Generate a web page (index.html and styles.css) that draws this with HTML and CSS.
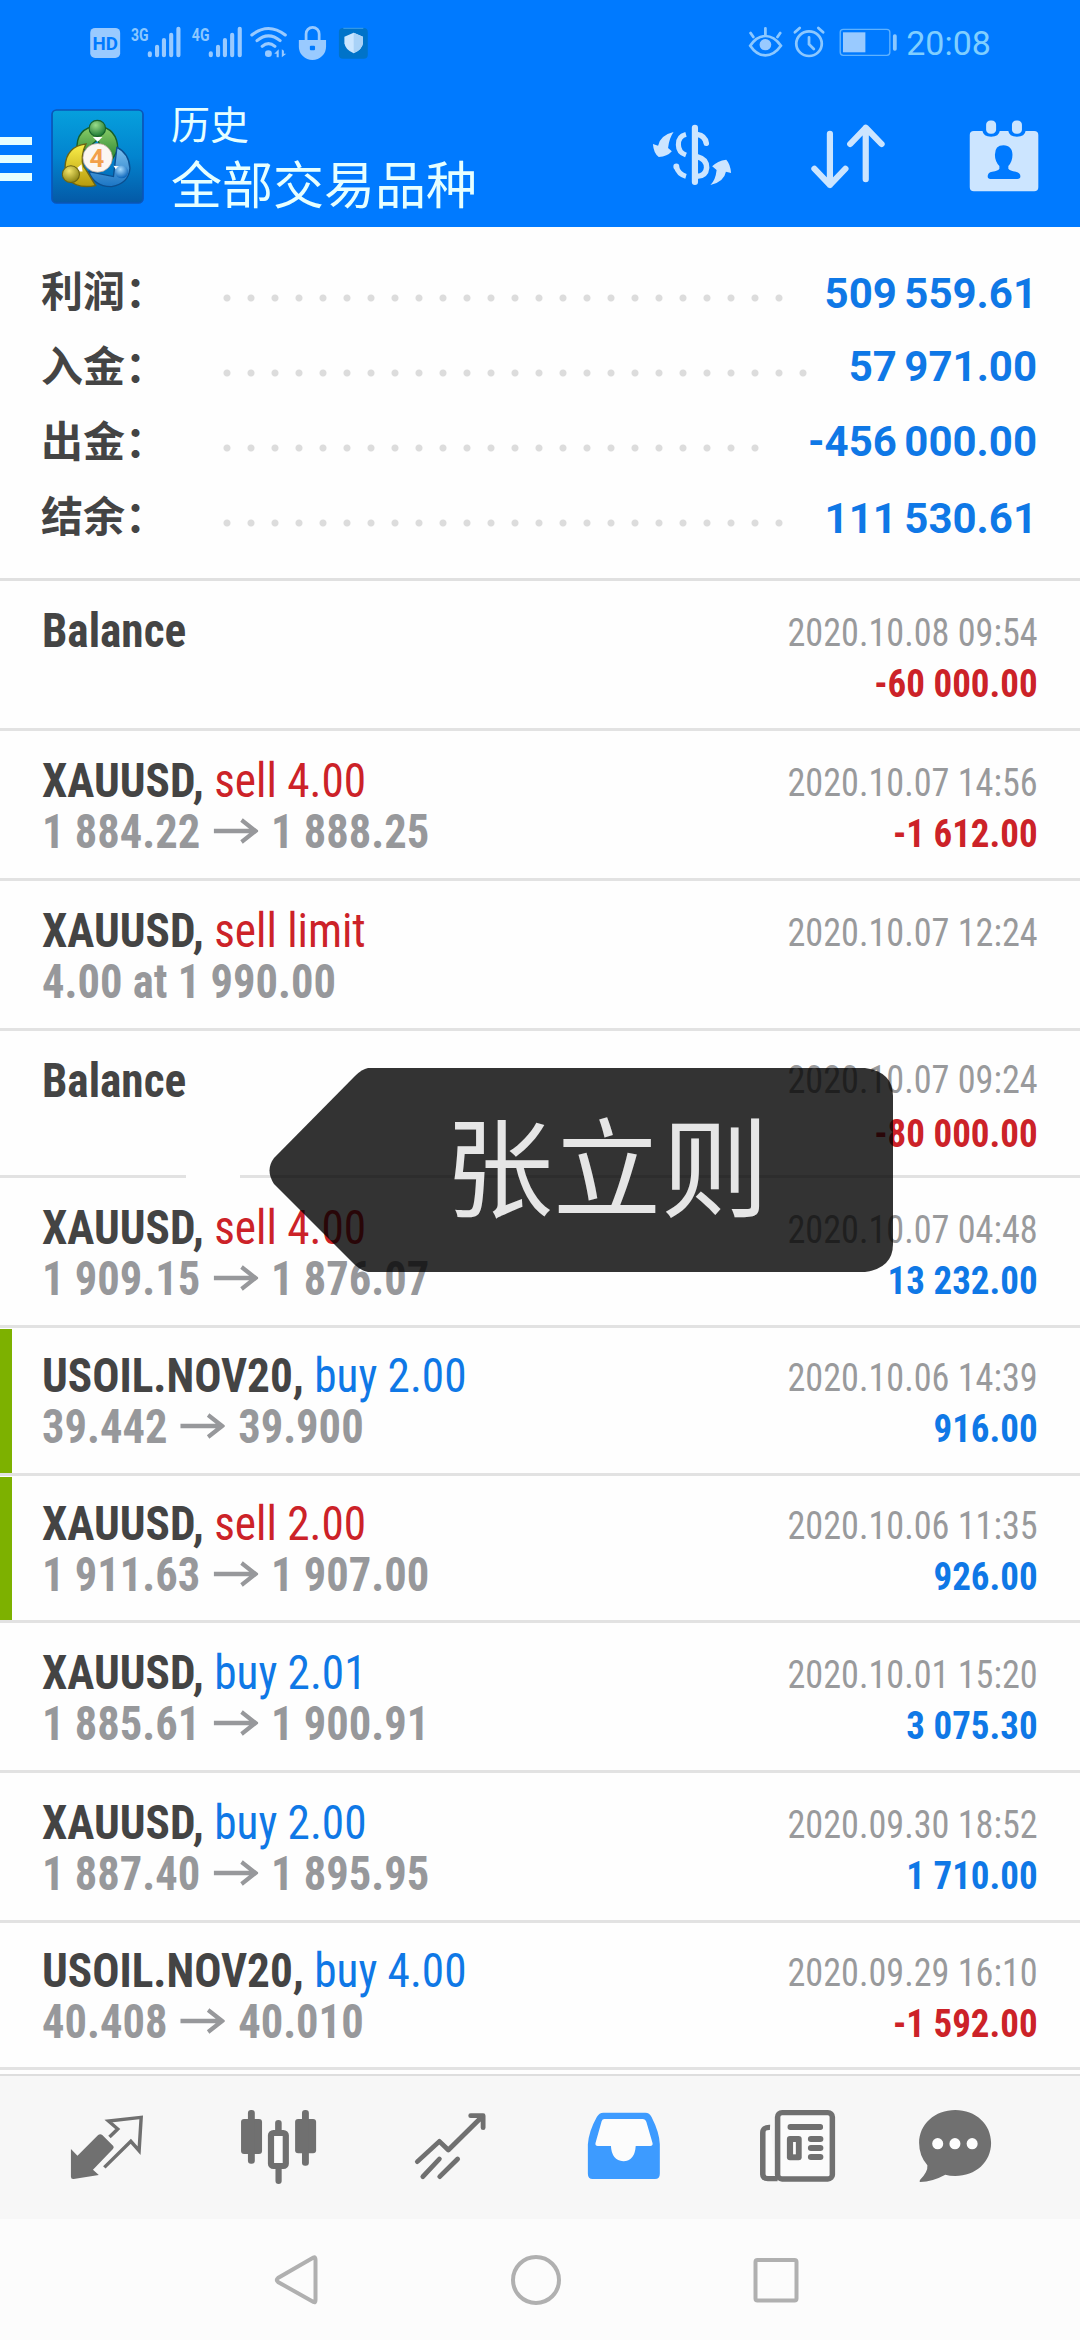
FILE: index.html
```html
<!DOCTYPE html>
<html lang="zh-CN">
<head>
<meta charset="utf-8">
<title>历史</title>
<link rel="stylesheet" href="styles.css">
</head>
<body>
<div class="screen">
  <header class="header">
    <div class="status">
      <div class="status-group">
        <svg class="ic" viewBox="240 60 120 130" width="41.3" height="43.3" preserveAspectRatio="none"><rect x="261" y="84" width="87" height="90" rx="14" fill="#99caff"/><text x="304.500" y="151" font-size="57" textLength="74" lengthAdjust="spacingAndGlyphs" text-anchor="middle" class="hd">HD</text></svg>
        <svg class="ic" viewBox="360 60 180 130" width="62" height="43.3" preserveAspectRatio="none"><text x="380" y="122" font-size="57" textLength="51" lengthAdjust="spacingAndGlyphs" class="net">3G</text><g stroke="#99caff" stroke-width="12" stroke-linecap="round"><path d="M435 160v6M456 140v26M476 120v46M497 104v62M518 86v80"/></g></svg>
        <svg class="ic" viewBox="540 60 175 130" width="60.3" height="43.3" preserveAspectRatio="none"><text x="557" y="122" font-size="57" textLength="51" lengthAdjust="spacingAndGlyphs" class="net">4G</text><g stroke="#99caff" stroke-width="12" stroke-linecap="round"><path d="M612 160v6M633 140v26M653 120v46M674 104v62M696 86v80"/></g></svg>
        <svg class="ic" viewBox="715 60 135 130" width="46.5" height="43.3" preserveAspectRatio="none"><g fill="none" stroke="#99caff" stroke-width="9" stroke-linecap="round"><path d="M732 105Q780 66 829 105M747 122Q780 93 814 122M762 139Q780 123 799 139"/></g><circle cx="780" cy="161" r="10" fill="#99caff"/><path d="M797 161l13-13v24h-6v-11zM819 148v24l13-11h-7v-9z" fill="#99caff"/></svg>
        <svg class="ic" viewBox="850 60 115 130" width="39.600" height="43.3" preserveAspectRatio="none"><path d="M888 122v-20a19 20 0 0 1 38 0v20" fill="none" stroke="#99caff" stroke-width="8"/><path d="M867 120h79v20a39.500 40 0 0 1-79 0z" fill="#99caff"/><rect x="899" y="137" width="15" height="14" rx="3" fill="#007aff"/></svg>
        <svg class="ic" viewBox="965 60 125 130" width="43" height="43.3" preserveAspectRatio="none"><rect x="985" y="84" width="84" height="92" rx="12" fill="#0073c9"/><path d="M998 85h58" stroke="#3fa0e8" stroke-width="3"/><path d="M1028 98l27 12v20q-3 20-27 30q-24-10-27-30v-20z" fill="#cbe6ff"/><path d="M1028 98l27 12v20q-3 20-27 30z" fill="#a9d2f7"/></svg>
      </div>
      <div class="status-group status-right">
        <svg class="ic" viewBox="590 60 130 130" width="44.800" height="43.3" preserveAspectRatio="none"><g fill="none" stroke="#8cc8ff" stroke-width="8" stroke-linecap="round"><path d="M611 137Q630 108 655 108T700 137Q680 166 655 166T611 137zM612 99l8 12M655 85v20M698 99l-8 12"/></g><circle cx="655" cy="134" r="17" fill="#99caff"/></svg>
        <svg class="ic" viewBox="720 60 130 130" width="44.800" height="43.3" preserveAspectRatio="none"><g fill="none" stroke="#8cc8ff" stroke-width="8" stroke-linecap="round"><circle cx="781" cy="131" r="37"/><path d="M740 97l14-13M808 84l14 13M781 112v21l14 14"/></g></svg>
        <svg class="ic" viewBox="850 60 200 130" width="68.900" height="43.3" preserveAspectRatio="none"><rect x="871" y="88" width="144" height="78" rx="9" fill="none" stroke="#5fb2ff" stroke-width="4"/><rect x="879" y="97" width="65" height="60" fill="#99caff"/><rect x="1024" y="103" width="11" height="49" rx="5" fill="#8cc8ff"/></svg>
        <span class="clock">20:08</span>
      </div>
    </div>
    <div class="toolbar">
      <div class="burger"><i></i><i></i><i></i></div>
      <svg class="logo" viewBox="148 328 271 284" preserveAspectRatio="none">
        <defs>
          <linearGradient id="bg" x1="0" y1="0" x2="0" y2="1"><stop offset="0" stop-color="#06a0dd"/><stop offset=".5" stop-color="#0284cf"/><stop offset="1" stop-color="#0459a6"/></linearGradient>
          <linearGradient id="gr" x1="0" y1="0" x2="0" y2="1"><stop offset="0" stop-color="#8fd06a"/><stop offset="1" stop-color="#1f7d2c"/></linearGradient>
          <linearGradient id="ye" x1="0" y1="0" x2="0" y2="1"><stop offset="0" stop-color="#fbf04a"/><stop offset="1" stop-color="#b79a0c"/></linearGradient>
          <linearGradient id="bl" x1="0" y1="0" x2="0" y2="1"><stop offset="0" stop-color="#7cc0ee"/><stop offset="1" stop-color="#1b75c4"/></linearGradient>
          <radialGradient id="gh" cx=".4" cy=".3" r=".7"><stop offset="0" stop-color="#9bdc8a"/><stop offset="1" stop-color="#1d7a33"/></radialGradient>
          <radialGradient id="yh" cx=".4" cy=".3" r=".7"><stop offset="0" stop-color="#f3e56a"/><stop offset="1" stop-color="#8c8414"/></radialGradient>
          <radialGradient id="bh" cx=".4" cy=".3" r=".7"><stop offset="0" stop-color="#a8dcff"/><stop offset="1" stop-color="#0c66bb"/></radialGradient>
        </defs>
        <rect x="151" y="331" width="265" height="278" rx="13" fill="url(#bg)" stroke="#0b56b8" stroke-width="5"/>
        <path d="M224 450Q220 385 283 378Q342 385 343 450L320 490L283 420L250 450Z" fill="url(#gr)" stroke="#16602a" stroke-width="4"/>
        <path d="M340 443Q375 460 378 505Q375 550 325 560Q275 562 258 515L330 530Z" fill="url(#bl)" stroke="#0b4f90" stroke-width="4"/>
        <path d="M250 432Q192 440 189 500L200 540Q225 567 278 557L250 510Q232 490 243 450Z" fill="url(#ye)" stroke="#6c6412" stroke-width="4"/>
        <path d="M212 515l25-22 3 22zM330 498l25 3-12 17z" fill="#fff"/>
        <path d="M270 412h28l-14 14z" fill="#fff"/>
        <circle cx="283" cy="386" r="24" fill="url(#gh)" stroke="#16602a" stroke-width="3"/>
        <circle cx="206" cy="523" r="25" fill="url(#yh)" stroke="#6c6412" stroke-width="3"/>
        <circle cx="354" cy="516" r="19" fill="url(#bh)"/>
        <circle cx="284" cy="474" r="43" fill="#fbf6f2" stroke="#b89a8a" stroke-width="2"/>
        <text x="282" y="500" font-size="75" text-anchor="middle" class="four">4</text>
      </svg>
      <div class="heading"><div class="heading-top">历史</div><div class="heading-main">全部交易品种</div></div>
      <div class="actions">
        <svg class="ic" viewBox="215 252 453 429" width="156" height="143" preserveAspectRatio="none"><g fill="none" stroke="#cce5ff"><path d="M450 383v163" stroke-width="18" stroke-linecap="round"/><path d="M424 403Q401 409 402 434Q402 457 424 465M396 500Q402 523 424 529" stroke-width="15"/><path d="M396 499v1" stroke-width="17" stroke-linecap="round"/><path d="M456 403Q480 407 483 430M456 470Q484 477 484 503Q482 528 456 529" stroke-width="16" stroke-linecap="round"/></g><path d="M388 396Q375 415 372 444L383 454Q370 470 345 471Q330 460 328 432L343 437Q350 405 388 396ZM495 555Q510 540 513 510L500 499Q515 482 541 479Q553 492 555 519L540 515Q535 545 495 555Z" fill="#cce5ff"/></svg>
        <svg class="ic" viewBox="668 252 453 429" width="156" height="143" preserveAspectRatio="none"><g fill="none" stroke="#cce5ff" stroke-width="18" stroke-linecap="round" stroke-linejoin="round"><path d="M842 401v154M797 506l45 49 45-49M946 538V383M901 432l45-49 46 49"/></g></svg>
        <svg class="ic" viewBox="1121 252 447 429" width="154" height="143" preserveAspectRatio="none"><path d="M1260 393h25q2 17 25 17t25-17h25q2 17 25 17t25-17h25q12 0 12 12v157q0 12-12 12h-175q-12 0-12-12v-157q0-12 12-12z" fill="#cce5ff"/><g fill="#cce5ff" stroke="#007aff" stroke-width="5"><rect x="1293" y="359" width="34" height="45" rx="15"/><rect x="1368" y="359" width="34" height="45" rx="15"/></g><path d="M1346 436c17 0 26 12 26 28q0 20-12 34v8q4 6 22 9 13 4 13 14 0 8-9 8h-78q-8 0-8-8 0-12 13-14 18-3 21-9v-8q-13-14-13-34 0-28 25-28z" fill="#007aff"/></svg>
      </div>
    </div>
  </header>

  <section class="summary">
    <div class="sum"><span class="sum-label">利润：</span><span class="dots" style="width:576px"></span><span class="sum-value">509 559.61</span></div>
    <div class="sum"><span class="sum-label">入金：</span><span class="dots" style="width:600px"></span><span class="sum-value">57 971.00</span></div>
    <div class="sum"><span class="sum-label">出金：</span><span class="dots" style="width:552px"></span><span class="sum-value">-456 000.00</span></div>
    <div class="sum"><span class="sum-label">结余：</span><span class="dots" style="width:576px"></span><span class="sum-value">111 530.61</span></div>
  </section>

  <main class="list">
    <article class="row">
      <div class="deal"><div class="title"><b>Balance</b></div></div>
      <div class="meta"><div class="date">2020.10.08 09:54</div><div class="amount neg">-60 000.00</div></div>
    </article>
    <article class="row">
      <div class="deal"><div class="title"><b>XAUUSD,</b> <span class="neg">sell 4.00</span></div><div class="price">1 884.22 <svg class="to" viewBox="0 0 48 26"><path d="M0 13h45M30 2l15 11-15 11"/></svg> 1 888.25</div></div>
      <div class="meta"><div class="date">2020.10.07 14:56</div><div class="amount neg">-1 612.00</div></div>
    </article>
    <article class="row">
      <div class="deal"><div class="title"><b>XAUUSD,</b> <span class="neg">sell limit</span></div><div class="price">4.00 at 1 990.00</div></div>
      <div class="meta"><div class="date">2020.10.07 12:24</div></div>
    </article>
    <article class="row row-short row-spread row-gap">
      <div class="deal"><div class="title"><b>Balance</b></div></div>
      <div class="meta"><div class="date">2020.10.07 09:24</div><div class="amount neg">-80 000.00</div></div>
    </article>
    <article class="row">
      <div class="deal"><div class="title"><b>XAUUSD,</b> <span class="neg">sell 4.00</span></div><div class="price">1 909.15 <svg class="to" viewBox="0 0 48 26"><path d="M0 13h45M30 2l15 11-15 11"/></svg> 1 876.07</div></div>
      <div class="meta"><div class="date">2020.10.07 04:48</div><div class="amount pos">13 232.00</div></div>
    </article>
    <article class="row row-tight row-marked">
      <div class="deal"><div class="title"><b>USOIL.NOV20,</b> <span class="pos">buy 2.00</span></div><div class="price">39.442 <svg class="to" viewBox="0 0 48 26"><path d="M0 13h45M30 2l15 11-15 11"/></svg> 39.900</div></div>
      <div class="meta"><div class="date">2020.10.06 14:39</div><div class="amount pos">916.00</div></div>
    </article>
    <article class="row row-short row-tight row-marked">
      <div class="deal"><div class="title"><b>XAUUSD,</b> <span class="neg">sell 2.00</span></div><div class="price">1 911.63 <svg class="to" viewBox="0 0 48 26"><path d="M0 13h45M30 2l15 11-15 11"/></svg> 1 907.00</div></div>
      <div class="meta"><div class="date">2020.10.06 11:35</div><div class="amount pos">926.00</div></div>
    </article>
    <article class="row">
      <div class="deal"><div class="title"><b>XAUUSD,</b> <span class="pos">buy 2.01</span></div><div class="price">1 885.61 <svg class="to" viewBox="0 0 48 26"><path d="M0 13h45M30 2l15 11-15 11"/></svg> 1 900.91</div></div>
      <div class="meta"><div class="date">2020.10.01 15:20</div><div class="amount pos">3 075.30</div></div>
    </article>
    <article class="row">
      <div class="deal"><div class="title"><b>XAUUSD,</b> <span class="pos">buy 2.00</span></div><div class="price">1 887.40 <svg class="to" viewBox="0 0 48 26"><path d="M0 13h45M30 2l15 11-15 11"/></svg> 1 895.95</div></div>
      <div class="meta"><div class="date">2020.09.30 18:52</div><div class="amount pos">1 710.00</div></div>
    </article>
    <article class="row row-short row-tight">
      <div class="deal"><div class="title"><b>USOIL.NOV20,</b> <span class="pos">buy 4.00</span></div><div class="price">40.408 <svg class="to" viewBox="0 0 48 26"><path d="M0 13h45M30 2l15 11-15 11"/></svg> 40.010</div></div>
      <div class="meta"><div class="date">2020.09.29 16:10</div><div class="amount neg">-1 592.00</div></div>
    </article>
  </main>

  <nav class="tabs">
    <svg class="tab" viewBox="61 45 499.500 432" preserveAspectRatio="none"><path d="M206 264L225 284L285 222Q291 217 297 222L329 255Q332 260 328 264L270 326L287 342L214 354Q206 355 206 347Z"/><path d="M318 228L342 204L315 180L410 169L404 269L380 241L303 319" fill="none" stroke="#707070" stroke-width="10"/></svg>
    <svg class="tab" viewBox="560.500 45 499.500 432" preserveAspectRatio="none"><rect x="700" y="174" width="61" height="105" rx="9"/><rect x="720" y="147" width="20" height="161" rx="9"/><rect x="857" y="174" width="61" height="103" rx="9"/><rect x="877" y="147" width="20" height="167" rx="9"/><rect x="799" y="177" width="19" height="45" rx="9"/><rect x="800" y="315" width="18" height="54" rx="9"/><rect x="787" y="216" width="43" height="99" rx="7" fill="#fbfbfb" stroke="#707070" stroke-width="18"/></svg>
    <svg class="tab" viewBox="1060 45 499.500 432" preserveAspectRatio="none"><path d="M1212 302L1276 241L1302 267L1402 165M1367 164H1403V200M1228 347L1276 294M1277 347L1329 294" fill="none" stroke="#707070" stroke-width="14" stroke-linecap="round" stroke-linejoin="round"/></svg>
    <svg class="tab" viewBox="-8.700 45 499.500 432" preserveAspectRatio="none"><path d="M184 155H306Q318 155 324 168Q347 215 348 250V338Q348 354 334 354H153Q139 354 139 338V250Q142 210 165 168Q172 155 184 155Z" fill="#3d9bff"/><path d="M187 174H298Q306 174 309 183L327 247Q328 255 320 255H278Q275 300 242 301Q208 298 206 255H168Q160 255 161 247L179 181Q181 174 187 174Z" fill="#fcfcfc"/></svg>
    <svg class="tab" viewBox="490.800 45 499.500 432" preserveAspectRatio="none"><path d="M668 199Q647 198 647 215V340Q648 353 662 353H690" fill="#fbfbfb" stroke="#707070" stroke-width="16"/><rect x="690" y="155" width="159" height="199" rx="13" fill="#fbfbfb" stroke="#707070" stroke-width="16"/><rect x="719" y="189" width="103" height="18" rx="8"/><rect x="717" y="225" width="43" height="73" rx="9"/><rect x="735" y="243" width="8" height="37" fill="#fff"/><g><rect x="778" y="225" width="45" height="18" rx="9"/><rect x="778" y="252" width="45" height="18" rx="9"/><rect x="778" y="279" width="45" height="18" rx="9"/></g></svg>
    <svg class="tab" viewBox="990.300 45 499.500 432" preserveAspectRatio="none"><path d="M1206 147C1265 147 1310 189 1310 246S1265 345 1206 345Q1190 345 1177 341Q1140 362 1104 363Q1100 361 1104 356Q1127 333 1125 313Q1101 285 1101 246C1101 189 1147 147 1206 147Z"/><g fill="#fdfdfd"><ellipse cx="1155" cy="248" rx="16" ry="17"/><ellipse cx="1205" cy="248" rx="16" ry="17"/><ellipse cx="1255" cy="248" rx="16" ry="17"/></g></svg>
  </nav>
  <nav class="sysnav">
    <svg class="key" viewBox="0 0 240 121"><path d="M137.500 38.500L102 59Q99.500 61 102 63L137.500 83Q139.500 84 139.500 81V41Q139.500 37.500 137.500 38.500Z"/></svg>
    <svg class="key" viewBox="0 0 240 121"><circle cx="120" cy="61" r="23"/></svg>
    <svg class="key" viewBox="0 0 240 121"><rect x="99.500" y="41" width="41" height="40.500" rx="2"/></svg>
  </nav>

  <div class="nametag">
    <svg class="nametag-bg" viewBox="0 0 624 204"><path d="M99 0H596Q624 4 624 28V176Q624 200 596 204H99Q93 203 86 197L5 116Q-4 102 5 90L86 8Q93 1 99 0Z"/></svg>
    <span class="nametag-text">张立则</span>
  </div>
</div>
</body>
</html>
```
FILE: styles.css
```css
* { box-sizing: border-box; }
body { margin: 0; background: #fff; font-family: Roboto, "Noto Sans CJK SC", sans-serif; }
svg { display: block; flex: none; }
.screen { position: relative; width: 1080px; height: 2340px; overflow: hidden; display: flex; flex-direction: column; background: #fefefe; }

.header { height: 227px; background: #007aff; color: #e6ffff; flex: none; }
.status { height: 84px; display: flex; justify-content: space-between; padding: 20px 0 0 82.600px; }
.status-group { display: flex; align-items: flex-start; }
.status-right { width: 336.800px; }
.clock { font-size: 34px; line-height: 46px; color: #80cfff; margin-left: 4.500px; }
.hd { font-family: Roboto, sans-serif; font-weight: 700; fill: #007aff; }
.net { font-family: Roboto, sans-serif; font-weight: 700; fill: #8cc8ff; }
.four { font-family: Roboto, sans-serif; font-weight: 700; fill: #f2a04a; }

.toolbar { height: 143px; display: flex; align-items: flex-start; }
.burger { width: 32px; padding-top: 53px; display: flex; flex-direction: column; gap: 10px; }
.burger i { height: 8px; background: #e6ffff; }
.logo { width: 93px; height: 95px; margin: 25px 0 0 19px; }
.heading { margin-left: 27px; padding-top: 13px; width: 443px; white-space: nowrap; font-family: "Noto Sans CJK SC", sans-serif; }
.heading-top { font-size: 39px; line-height: 50px; }
.heading-main { font-size: 51px; line-height: 70px; }
.actions { display: flex; }

.summary { height: 354px; flex: none; padding: 26px 43px 0 41px; border-bottom: 3px solid #e0e0e0; }
.sum { height: 75px; display: flex; align-items: flex-start; }
.sum-label { width: 174px; font: 700 42px/72px "Noto Sans CJK SC", sans-serif; color: #444; white-space: nowrap; }
.dots { height: 8px; margin-top: 41px; background: radial-gradient(circle at 12px 4px, #dcdcdc 3px, transparent 4px) 0 0 / 24px 8px repeat-x; }
.sum-value { margin-left: auto; font-size: 42px; font-weight: 700; line-height: 75px; padding-top: 3px; word-spacing: -3px; color: #0f78e6; white-space: nowrap; }
.sum:nth-child(2) .sum-value, .sum:nth-child(3) .sum-value { padding-top: 1px; }

.list { flex: none; height: 1493px; font-family: "Roboto Condensed", Roboto, sans-serif; font-stretch: 75%; }
.row { position: relative; height: 150px; display: flex; justify-content: space-between; padding: 24px 42px 0 42px; border-bottom: 3px solid #e2e2e2; white-space: nowrap; }
.row-tight { height: 148px; padding-top: 22px; }
.row-short { height: 147px; }
.title { font-size: 48px; line-height: 51px; transform: scaleX(.942); transform-origin: left; }
.title b { color: #444; }
.price { font-size: 48px; line-height: 51px; font-weight: 700; color: #97989b; transform: scaleX(.928); transform-origin: left; }
.to { display: inline-block; width: 48px; height: 26px; margin: 0 3px; vertical-align: 4px; fill: none; stroke: #97989b; stroke-width: 4.500; }
.meta { padding-top: 3px; text-align: right; }
.date { font-size: 39px; line-height: 51px; color: #999a9c; transform: scaleX(.928); transform-origin: right; }
.amount { font-size: 39px; line-height: 51px; font-weight: 700; transform: scaleX(.948); transform-origin: right; }
.neg { color: #cc2228; }
.pos { color: #0f78e6; }
.row-spread .meta { padding-top: 0; }
.row-spread .date { margin-bottom: 3px; }
.row-gap::after { content: ""; position: absolute; left: 186px; bottom: -3px; width: 54px; height: 3px; background: #fefefe; }
.row-marked::before { content: ""; position: absolute; left: 0; top: 1px; bottom: 0; width: 12px; background: #7db100; }

.tabs { height: 145px; flex: none; display: flex; padding-left: 21px; background: #f7f7f7; border-top: 2px solid #dedede; }
.tab { width: 172px; height: 144px; fill: #707070; }
.sysnav { flex: none; height: 121px; display: flex; padding-left: 176px; background: #fcfcfc; }
.key { width: 240px; height: 121px; fill: none; stroke: #b0b0b0; stroke-width: 4; }

.nametag { position: absolute; left: 269px; top: 1068px; width: 624px; height: 204px; }
.nametag-bg { width: 624px; height: 204px; fill: rgba(0, 0, 0, .8); }
.nametag-text { position: absolute; left: 176px; top: 0; font: 400 108px/188px "Noto Sans CJK SC", sans-serif; color: #e6e6e6; white-space: nowrap; }
```
